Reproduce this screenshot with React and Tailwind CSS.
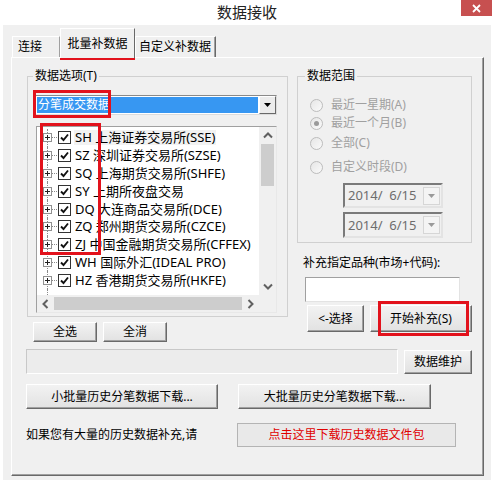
import React from "react";

const FONT = "font-['Noto_Sans','Noto_Sans_CJK_SC',sans-serif]";

function Btn({ className = "", children }) {
  return (
    <div
      className={
        "flex items-center justify-center text-[12px] leading-none text-black bg-linear-to-b from-[#f2f2f2] to-[#e2e2e2] border border-t-white border-l-white border-r-[#696969] border-b-[#696969] shadow-[inset_-1px_-1px_0_#a0a0a0] " +
        className
      }
    >
      {children}
    </div>
  );
}

function Chev({ dir }) {
  if (dir === "up" || dir === "down") {
    const pts = dir === "up" ? "1,5.5 5,1.5 9,5.5" : "1,1.5 5,5.5 9,1.5";
    return (
      <svg width="10" height="7" viewBox="0 0 10 7">
        <polyline points={pts} fill="none" stroke="#606060" strokeWidth="2" />
      </svg>
    );
  }
  const pts = dir === "left" ? "5.5,1 1.5,5 5.5,9" : "1.5,1 5.5,5 1.5,9";
  return (
    <svg width="7" height="10" viewBox="0 0 7 10">
      <polyline points={pts} fill="none" stroke="#606060" strokeWidth="2" />
    </svg>
  );
}

function Check() {
  return (
    <div className="w-[13px] h-[13px] border border-[#333] bg-white flex items-center justify-center shrink-0">
      <svg width="9" height="9" viewBox="0 0 9 9">
        <polyline points="1,4.5 3.5,7 8,1.5" fill="none" stroke="#111" strokeWidth="1.9" />
      </svg>
    </div>
  );
}

function Expander() {
  return (
    <div className="relative w-[9px] h-full shrink-0 flex items-center">
      <div className="absolute left-[4px] top-0 bottom-0 border-l border-dotted border-[#8a8a8a]" />
      <div className="relative w-[9px] h-[9px] border border-[#919191] bg-white flex items-center justify-center">
        <svg width="7" height="7" viewBox="0 0 7 7">
          <line x1="1" y1="3.5" x2="6" y2="3.5" stroke="#222" strokeWidth="1" />
          <line x1="3.5" y1="1" x2="3.5" y2="6" stroke="#222" strokeWidth="1" />
        </svg>
      </div>
    </div>
  );
}

const ROWS = [
  ["SH", "上海证券交易所(SSE)"],
  ["SZ", "深圳证券交易所(SZSE)"],
  ["SQ", "上海期货交易所(SHFE)"],
  ["SY", "上期所夜盘交易"],
  ["DQ", "大连商品交易所(DCE)"],
  ["ZQ", "郑州期货交易所(CZCE)"],
  ["ZJ", "中国金融期货交易所(CFFEX)"],
  ["WH", "国际外汇(IDEAL PRO)"],
  ["HZ", "香港期货交易所(HKFE)"],
];

function Radio({ checked }) {
  return (
    <div className="w-[13px] h-[13px] rounded-full border border-[#bcbcbc] bg-linear-to-br from-[#e6e6e6] to-[#fafafa] flex items-center justify-center shrink-0">
      {checked && <div className="w-[5px] h-[5px] rounded-full bg-[#9a9a9a]" />}
    </div>
  );
}

function DatePick({ className = "" }) {
  return (
    <div
      className={
        "w-[100px] flex items-center border-2 border-t-[#7a7a7a] border-l-[#7a7a7a] border-r-[#e3e3e3] border-b-[#e3e3e3] bg-[#f0f0f0] " +
        className
      }
    >
      <div className="flex-1 pl-[3px] text-[13px] text-[#6d6d6d] leading-none whitespace-pre">2014/  6/15</div>
      <div className="w-[17px] h-[18px] mr-[1px] border border-[#d6d6d6] bg-[#f4f4f4] flex items-center justify-center">
        <svg width="7" height="4" viewBox="0 0 7 4">
          <polygon points="0,0 7,0 3.5,4" fill="#9a9a9a" />
        </svg>
      </div>
    </div>
  );
}

const RED = "absolute border-[3px] border-[#e2121c] pointer-events-none";

export default function App() {
  return (
    <div className={"relative w-[494px] h-[483px] bg-white overflow-hidden " + FONT}>
      {/* title bar */}
      <div className="relative h-[25px] flex items-center justify-center">
        <span className="text-[15px] text-[#222] leading-none">数据接收</span>
        <div className="absolute right-[2px] top-0 w-[31px] h-[16px] bg-[#c75050] flex items-center justify-center">
          <svg width="9" height="9" viewBox="0 0 9 9">
            <line x1="1" y1="1" x2="8" y2="8" stroke="#fff" strokeWidth="1.8" />
            <line x1="8" y1="1" x2="1" y2="8" stroke="#fff" strokeWidth="1.8" />
          </svg>
        </div>
      </div>

      {/* body */}
      <div className="ml-[3px] w-[488px] h-[455px] bg-[#f0f0f0]">
        {/* tabs */}
        <div className="flex items-end h-[32px] pl-[9px]">
          <div className="w-[48px] h-[21px] border border-b-0 border-t-white border-l-white border-r-[#a0a0a0] flex items-center pl-[5px] text-[12px] leading-none">
            连接
          </div>
          <div className="relative z-10 w-[75px] h-[30px] -mb-[1px] bg-[#f0f0f0] border border-b-0 border-t-white border-l-white border-r-[#696969] flex items-center justify-center text-[12px] leading-none pt-[1px]">
            批量补数据
          </div>
          <div className="w-[81px] h-[21px] border border-b-0 border-t-white border-l-white border-r-[#696969] shadow-[inset_-1px_0_0_#a0a0a0] flex items-center pl-[3px] text-[12px] leading-none">
            自定义补数据
          </div>
        </div>

        {/* panel */}
        <div className="ml-[8px] w-[473px] h-[419px] border border-t-white border-l-white border-r-[#696969] border-b-[#696969] shadow-[inset_-1px_-1px_0_#a0a0a0] flex flex-col">
          <div className="flex items-start mt-[10px] ml-[15px]">
            {/* left column */}
            <div className="w-[261px] flex flex-col">
              <fieldset className="border border-[#d0d0d0] pb-[3px] flex flex-col">
                <legend className="ml-[5px] px-[2px] text-[12px] leading-[16px]">数据选项(T)</legend>
                <div className="ml-[7px] mt-[11px] w-[242px] h-[20px] flex border border-t-[#8a8a8a] border-l-[#8a8a8a] border-r-[#dcdcdc] border-b-[#dcdcdc] bg-white">
                  <div className="flex-1 m-[1px] bg-[#3797f2] text-white text-[12px] leading-none flex items-center pl-[1px]">
                    分笔成交数据
                  </div>
                  <div className="w-[17px] h-full border border-t-white border-l-white border-r-[#696969] border-b-[#696969] bg-[#ececec] flex items-center justify-center">
                    <svg width="7" height="4" viewBox="0 0 7 4">
                      <polygon points="0,0 7,0 3.5,4" fill="#000" />
                    </svg>
                  </div>
                </div>
                {/* tree */}
                <div className="ml-[8px] mt-[11px] w-[241px] h-[187px] border border-t-[#a0a0a0] border-l-[#a0a0a0] border-r-[#e8e8e8] border-b-[#e8e8e8] bg-white flex flex-col">
                  <div className="flex flex-1 min-h-0">
                    <div className="flex-1 flex flex-col pt-[2px] overflow-hidden">
                      {ROWS.map(([code, name], i) => (
                        <div key={code} className="flex items-center h-[17.8px] pl-[6px] shrink-0">
                          <Expander />
                          <div className="w-[5px] border-t border-dotted border-[#8a8a8a]" />
                          <div className="ml-[1px]"><Check /></div>
                          <div className={"ml-[3px] px-[1px] text-[13px] leading-[15px] whitespace-nowrap text-black " + (i === 0 ? "bg-[#f2f2f2]" : "")}>
                            {code} {name}
                          </div>
                        </div>
                      ))}
                      <div className="pl-[10px] flex-1">
                        <div className="h-full border-l border-dotted border-[#8a8a8a]" />
                      </div>
                    </div>
                    {/* vertical scrollbar */}
                    <div className="w-[17px] bg-[#f0f0f0] flex flex-col items-center">
                      <div className="h-[17px] flex items-center justify-center"><Chev dir="up" /></div>
                      <div className="w-[13px] h-[42px] bg-[#cdcdcd]" />
                      <div className="flex-1" />
                      <div className="h-[17px] flex items-center justify-center"><Chev dir="down" /></div>
                    </div>
                  </div>
                  {/* horizontal scrollbar */}
                  <div className="h-[17px] flex bg-[#f0f0f0]">
                    <div className="w-[17px] flex items-center justify-center"><Chev dir="left" /></div>
                    <div className="w-[188px] h-[13px] mt-[2px] bg-[#cdcdcd]" />
                    <div className="flex-1 flex items-center justify-center"><Chev dir="right" /></div>
                    <div className="w-[17px] bg-[#f0f0f0]" />
                  </div>
                </div>
              </fieldset>
              <div className="flex mt-[5px] ml-[6px] gap-[6px]">
                <Btn className="w-[64px] h-[20px]">全选</Btn>
                <Btn className="w-[64px] h-[20px]">全消</Btn>
              </div>
            </div>

            {/* right column */}
            <div className="ml-[9px] w-[175px] flex flex-col">
              <fieldset className="border border-[#d0d0d0] pb-[4px] flex flex-col">
                <legend className="ml-[7px] px-[2px] text-[12px] leading-[16px]">数据范围</legend>
                <div className="flex items-center h-[16px] mt-[13px] ml-[12px]">
                  <Radio />
                  <span className="ml-[8px] text-[12px] leading-none text-[#a0a0a0]">最近一星期(A)</span>
                </div>
                <div className="flex items-center h-[16px] mt-[2px] ml-[12px]">
                  <Radio checked />
                  <span className="ml-[8px] text-[12px] leading-none text-[#a0a0a0]">最近一个月(B)</span>
                </div>
                <div className="flex items-center h-[16px] mt-[4px] ml-[12px]">
                  <Radio />
                  <span className="ml-[8px] text-[12px] leading-none text-[#a0a0a0]">全部(C)</span>
                </div>
                <div className="flex items-center h-[16px] mt-[8px] ml-[12px]">
                  <Radio />
                  <span className="ml-[8px] text-[12px] leading-none text-[#a0a0a0]">自定义时段(D)</span>
                </div>
                <DatePick className="ml-[45px] mt-[8px] h-[25px]" />
                <DatePick className="ml-[45px] mt-[4px] h-[26px]" />
              </fieldset>
              <div className="mt-[12px] ml-[6px] h-[16px] flex items-center text-[12px] leading-none">
                补充指定品种(市场+代码):
              </div>
              <div className="mt-[6px] ml-[8px] w-[155px] h-[25px] border border-t-[#a0a0a0] border-l-[#a0a0a0] border-r-[#e3e3e3] border-b-[#e3e3e3] bg-white" />
              <div className="flex mt-[3px] ml-[10px]">
                <Btn className="w-[57px] h-[27px]">&lt;-选择</Btn>
                <Btn className="ml-[6px] w-[102px] h-[27px]">开始补充(S)</Btn>
              </div>
            </div>
          </div>

          {/* row 2 */}
          <div className="flex items-start mt-[7px] ml-[14px]">
            <div className="w-[372px] h-[25px] border border-t-[#c8c8c8] border-l-[#c8c8c8] border-r-white border-b-white bg-[#ececec]" />
            <Btn className="ml-[6px] mt-[1px] w-[68px] h-[24px]">数据维护</Btn>
          </div>

          {/* row 3 */}
          <div className="flex mt-[10px] ml-[14px]">
            <Btn className="w-[192px] h-[25px]">小批量历史分笔数据下载...</Btn>
            <Btn className="ml-[20px] w-[193px] h-[25px]">大批量历史分笔数据下载...</Btn>
          </div>

          {/* row 4 */}
          <div className="flex items-center mt-[14px] ml-[14px]">
            <div className="w-[211px] text-[12px] leading-none">如果您有大量的历史数据补充,请</div>
            <div className="w-[219px] h-[24px] border border-[#b4b4b4] bg-[#e9e9e9] flex items-center justify-center text-[12px] leading-none text-[#e00000]">
              点击这里下载历史数据文件包
            </div>
          </div>
        </div>
      </div>

      {/* red annotation boxes */}
      <div className={RED + " left-[60px] top-[30px] w-[75px] h-[30px]"} />
      <div className={RED + " left-[33px] top-[90px] w-[78px] h-[28px]"} />
      <div className={RED + " left-[40px] top-[123px] w-[61px] h-[132px]"} />
      <div className={RED + " left-[378px] top-[301px] w-[91px] h-[35px]"} />
    </div>
  );
}
